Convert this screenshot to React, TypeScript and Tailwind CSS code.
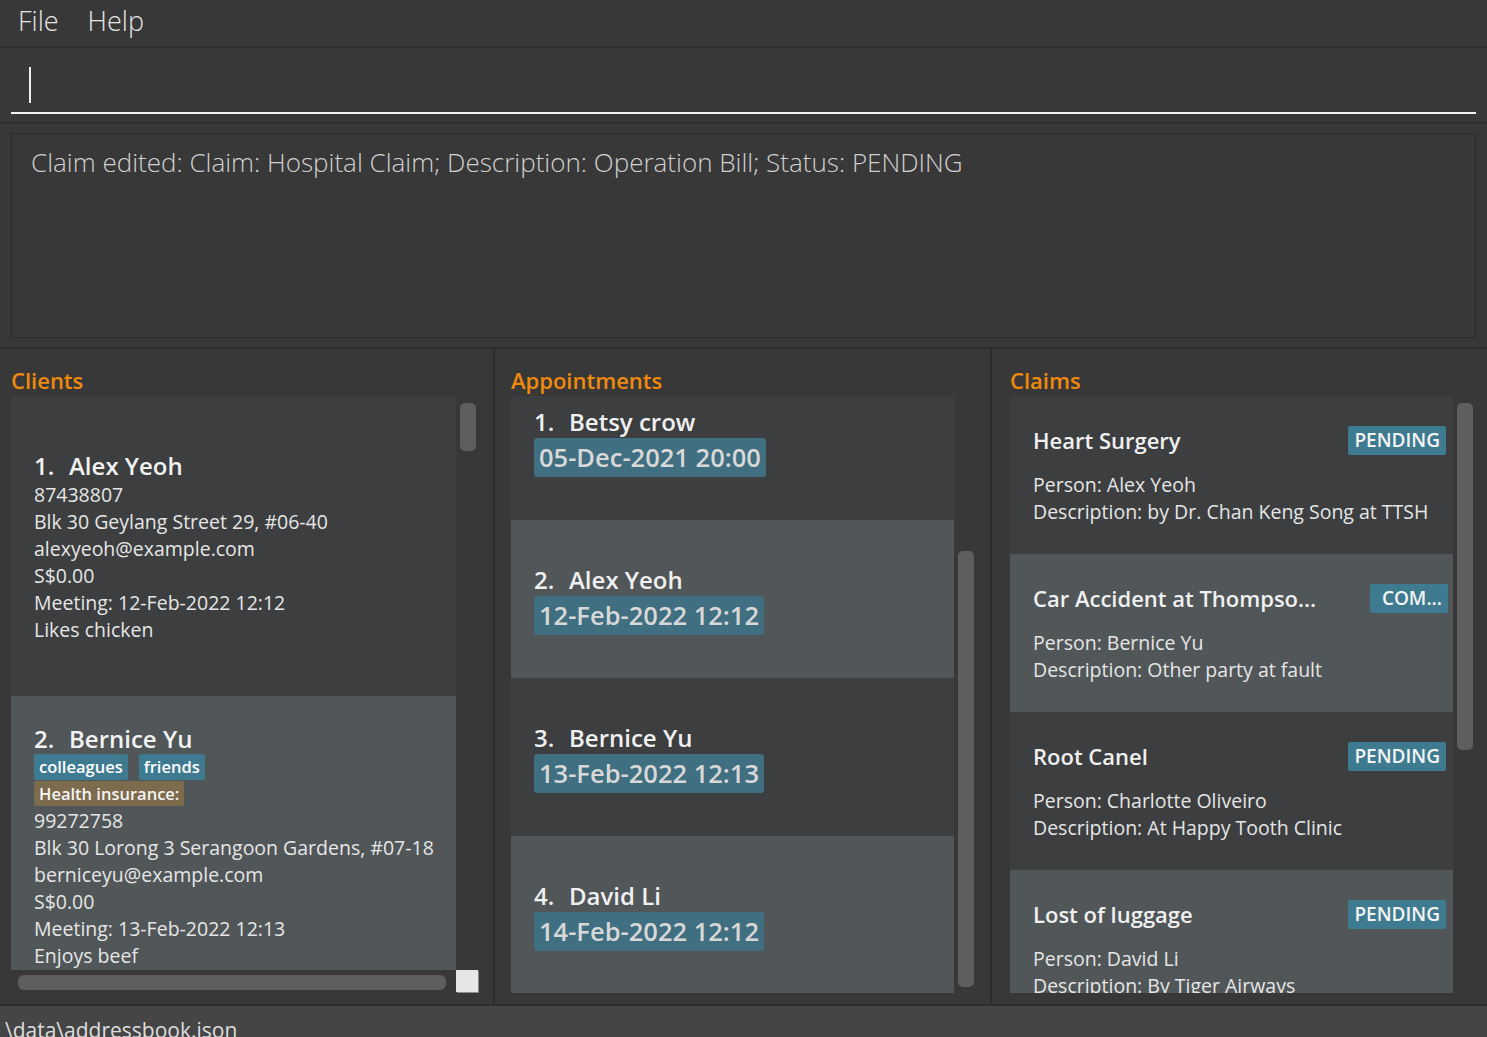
import React from 'react';

interface Client {
  name: string;
  tags: string[];
  insurance: string[];
  phone: string;
  address: string;
  email: string;
  money: string;
  meeting: string;
  remark: string;
}

const clients: Client[] = [
  {
    name: 'Alex Yeoh',
    tags: [],
    insurance: [],
    phone: '87438807',
    address: 'Blk 30 Geylang Street 29, #06-40',
    email: 'alexyeoh@example.com',
    money: 'S$0.00',
    meeting: 'Meeting: 12-Feb-2022 12:12',
    remark: 'Likes chicken',
  },
  {
    name: 'Bernice Yu',
    tags: ['colleagues', 'friends'],
    insurance: ['Health insurance:'],
    phone: '99272758',
    address: 'Blk 30 Lorong 3 Serangoon Gardens, #07-18',
    email: 'berniceyu@example.com',
    money: 'S$0.00',
    meeting: 'Meeting: 13-Feb-2022 12:13',
    remark: 'Enjoys beef',
  },
];

const appointments = [
  { name: 'Betsy crow', date: '05-Dec-2021 20:00' },
  { name: 'Alex Yeoh', date: '12-Feb-2022 12:12' },
  { name: 'Bernice Yu', date: '13-Feb-2022 12:13' },
  { name: 'David Li', date: '14-Feb-2022 12:12' },
];

const claims = [
  { title: 'Heart Surgery', status: 'PENDING', person: 'Alex Yeoh', desc: 'by Dr. Chan Keng Song at TTSH' },
  { title: 'Car Accident at Thompso...', status: 'COM...', person: 'Bernice Yu', desc: 'Other party at fault' },
  { title: 'Root Canel', status: 'PENDING', person: 'Charlotte Oliveiro', desc: 'At Happy Tooth Clinic' },
  { title: 'Lost of luggage', status: 'PENDING', person: 'David Li', desc: 'By Tiger Airways' },
];

const cellBg = (i: number) => (i % 2 === 0 ? 'bg-[#3c3e3f]' : 'bg-[#515658]');

const PanelTitle = ({ children }: { children: React.ReactNode }) => (
  <div className="h-[47px] pt-[18px] text-[22px] leading-[26px] font-semibold text-[#f08a0c]">{children}</div>
);

const VScroll = ({ top, height }: { top: string; height: string }) => (
  <div className="relative w-[22px] shrink-0">
    <div className={`absolute left-[4px] w-[16px] rounded-[5px] bg-[#5e5e5e] ${top} ${height}`} />
  </div>
);

const App: React.FC = () => {
  return (
    <div className="w-[1487px] h-[1037px] overflow-hidden flex flex-col bg-[#383838] text-[#e8e8e8] font-['Open_Sans',sans-serif]">
      {/* Menu bar */}
      <div className="h-[48px] shrink-0 flex items-center gap-[29px] pl-[18px] pb-[4px] border-b-2 border-[#2e2e2e] text-[27px] font-light text-[#e6e6e6]">
        <span>File</span>
        <span>Help</span>
      </div>

      {/* Command box */}
      <div className="h-[76px] shrink-0 px-[11px] pt-[19px] border-b-2 border-[#2e2e2e]">
        <div className="h-[47px] border-b-2 border-[#f2f2f2] pl-[18px]">
          <div className="w-[2px] h-[36px] bg-[#f0f0f0]" />
        </div>
      </div>

      {/* Result display */}
      <div className="h-[225px] shrink-0 px-[11px] pt-[9px] pb-[9px] border-b-2 border-[#2e2e2e]">
        <div className="h-full border border-[#2a2a2a] px-[19px] pt-[11px] text-[26px] leading-[34px] font-light text-[#d0d0d0]">
          Claim edited: Claim: Hospital Claim; Description: Operation Bill; Status: PENDING
        </div>
      </div>

      {/* Panels */}
      <div className="h-[657px] shrink-0 flex border-b-2 border-[#2e2e2e]">
        {/* Clients */}
        <div className="w-[495px] shrink-0 border-r-2 border-[#2b2b2b] pl-[11px] flex flex-col">
          <PanelTitle>Clients</PanelTitle>
          <div className="flex">
            <div className="w-[445px] h-[574px] overflow-hidden">
              {clients.map((c, i) => (
                <div key={c.name} className={`h-[300px] shrink-0 flex flex-col justify-center pl-[23px] ${cellBg(i)}`}>
                  <div className="flex text-[24px] leading-[31px] font-semibold text-[#f2f2f2]">
                    <span className="w-[35px]">{i + 1}.</span>
                    <span>{c.name}</span>
                  </div>
                  {c.tags.length > 0 && (
                    <div className="flex gap-[11px] h-[27px]">
                      {c.tags.map(t => (
                        <span key={t} className="h-[26px] px-[5px] rounded-[2px] bg-[#3e7b91] text-[16.5px] leading-[26px] font-semibold text-white">{t}</span>
                      ))}
                    </div>
                  )}
                  {c.insurance.length > 0 && (
                    <div className="flex h-[26px]">
                      {c.insurance.map(t => (
                        <span key={t} className="h-[25px] px-[5px] rounded-[2px] bg-[#7d6b4e] text-[16.5px] leading-[25px] font-semibold text-[#f4f4f4]">{t}</span>
                      ))}
                    </div>
                  )}
                  <div className="text-[19.5px] leading-[27px] text-[#e6e6e6] whitespace-nowrap">
                    <div>{c.phone}</div>
                    <div>{c.address}</div>
                    <div>{c.email}</div>
                    <div>{c.money}</div>
                    <div>{c.meeting}</div>
                    <div>{c.remark}</div>
                  </div>
                </div>
              ))}
            </div>
            <VScroll top="top-[7px]" height="h-[48px]" />
          </div>
          <div className="flex h-[22px]">
            <div className="w-[445px] relative">
              <div className="absolute left-[7px] right-[10px] top-[5px] h-[15px] rounded-[6px] bg-[#5e5e5e]" />
            </div>
            <div className="w-[22px] h-[22px] bg-[#e6e6e6] shadow-[1px_1px_0_#8a8a8a]" />
          </div>
        </div>

        {/* Appointments */}
        <div className="w-[497px] shrink-0 border-r-2 border-[#2b2b2b] pl-[16px] flex flex-col">
          <PanelTitle>Appointments</PanelTitle>
          <div className="flex">
            <div className="w-[443px] h-[597px] overflow-hidden">
              <div className="-mt-[34px]">
                {appointments.map((a, i) => (
                  <div key={a.name} className={`h-[158px] flex flex-col justify-center items-start pl-[23px] ${cellBg(i)}`}>
                    <div className="flex text-[24px] leading-[32px] font-semibold text-[#f0f0f0]">
                      <span className="w-[35px]">{i + 1}.</span>
                      <span>{a.name}</span>
                    </div>
                    <div className="h-[39px] px-[5px] rounded-[3px] bg-[#3f6f80] text-[25.5px] leading-[39px] font-semibold text-[#d8d8d8]">{a.date}</div>
                  </div>
                ))}
              </div>
            </div>
            <VScroll top="top-[155px]" height="h-[436px]" />
          </div>
        </div>

        {/* Claims */}
        <div className="flex-1 pl-[18px] flex flex-col">
          <PanelTitle>Claims</PanelTitle>
          <div className="flex">
            <div className="w-[443px] h-[597px] overflow-hidden">
              {claims.map((c, i) => (
                <div key={c.title} className={`h-[158px] shrink-0 flex flex-col justify-center pl-[23px] pr-[7px] ${cellBg(i)}`}>
                  <div className="flex items-center justify-between h-[29px] mb-[16px]">
                    <span className="text-[22px] font-semibold text-[#f0f0f0] whitespace-nowrap">{c.title}</span>
                    <span className={`h-[29px] rounded-[2px] bg-[#3e7b91] text-[19px] leading-[29px] font-semibold text-[#f4f4f4] ${c.status === 'PENDING' ? 'px-[6px]' : 'pl-[12px] pr-[6px] -mr-[2px]'}`}>{c.status}</span>
                  </div>
                  <div className="text-[19.5px] leading-[27px] text-[#e6e6e6] whitespace-nowrap">
                    <div>Person: {c.person}</div>
                    <div>Description: {c.desc}</div>
                  </div>
                </div>
              ))}
            </div>
            <VScroll top="top-[7px]" height="h-[347px]" />
          </div>
        </div>
      </div>

      {/* Status bar */}
      <div className="flex-1 bg-[#454545] pl-[5px] pt-[10px] text-[21px] leading-[28px] text-[#dddddd] overflow-hidden whitespace-nowrap">
        \data\addressbook.json
      </div>
    </div>
  );
};

export default App;
